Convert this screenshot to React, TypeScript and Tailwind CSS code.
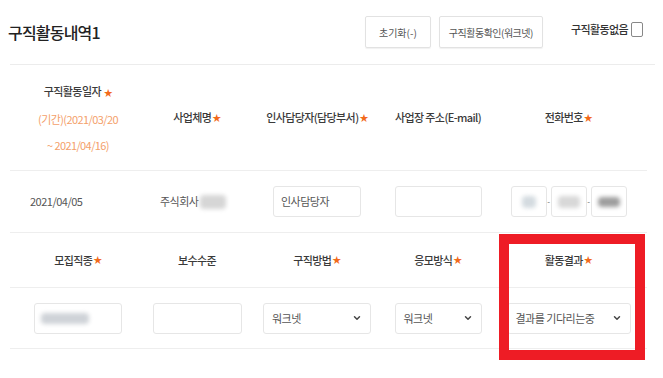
import { ChevronDown } from "lucide-react"

const font = { fontFamily: '"Noto Sans CJK KR", "Noto Sans", sans-serif' }

function Star() {
  return <span className="text-[#f26a1b] text-[9px] ml-[1px]">★</span>
}

function Blur({ w, h = 12, tone = "bg-[#c9c9c9]" }: { w: number; h?: number; tone?: string }) {
  return <span className={`inline-block rounded-sm blur-[2px] ${tone}`} style={{ width: w, height: h }} />
}

function Box({ children, w, className = "" }: { children?: React.ReactNode; w: string; className?: string }) {
  return (
    <div className={`h-[31px] border border-[#e6e6e6] rounded-[3px] bg-white flex items-center ${w} ${className}`}>
      {children}
    </div>
  )
}

function Select({ label, w }: { label: string; w: string }) {
  return (
    <Box w={w} className="px-[8px] justify-between">
      <span className="text-[11px] text-[#555] tracking-[-0.5px]">{label}</span>
      <ChevronDown size={10} strokeWidth={3.5} className="text-[#444]" />
    </Box>
  )
}

const cols = "grid grid-cols-[136px_102px_138px_104px_157px]"
const head = "flex items-center justify-center text-[11px] text-[#3a3a3a] font-medium tracking-[-0.6px]"

export default function App() {
  return (
    <div className="relative w-[663px] h-[378px] bg-white overflow-hidden" style={font}>
      {/* title bar */}
      <div className="h-[64px] flex items-center pl-[8px] pr-[20px]">
        <h1 className="text-[16px] font-medium text-[#222] tracking-[-0.8px]">구직활동내역1</h1>
        <div className="ml-auto flex items-center gap-[8px]">
          <button className="w-[66px] h-[32px] border border-[#e2e2e2] rounded-[2px] text-[10px] text-[#555] shadow-[0_1px_1px_rgba(0,0,0,0.06)]">
            초기화(-)
          </button>
          <button className="w-[104px] h-[32px] border border-[#e2e2e2] rounded-[2px] text-[10px] text-[#555] tracking-[-0.5px] shadow-[0_1px_1px_rgba(0,0,0,0.06)]">
            구직활동확인(워크넷)
          </button>
        </div>
        <div className="ml-[28px] flex items-center gap-[3px] -mt-[5px]">
          <span className="text-[11px] text-[#333] font-medium tracking-[-0.6px]">구직활동없음</span>
          <span className="w-[12px] h-[15px] border border-[#888] rounded-[2px]" />
        </div>
      </div>
      <div className="mx-[10px] mr-[8px] h-px bg-[#ececec]" />

      {/* table */}
      <div className="mx-[10px] w-[637px]">
        <div className={`${cols} h-[106px] border-b border-[#eeeeee]`}>
          <div className="flex flex-col items-center justify-center text-[11px] leading-[26px] tracking-[-0.6px]">
            <span className="text-[#3a3a3a] font-medium">
              구직활동일자 <Star />
            </span>
            <span className="text-[#f4a06a]">(기간)(2021/03/20</span>
            <span className="text-[#f4a06a]">~ 2021/04/16)</span>
          </div>
          <div className={head}>
            사업체명
            <Star />
          </div>
          <div className={head}>
            인사담당자(담당부서)
            <Star />
          </div>
          <div className={head}>사업장 주소(E-mail)</div>
          <div className={head}>
            전화번호
            <Star />
          </div>
        </div>

        <div className={`${cols} h-[62px] border-b border-[#eeeeee] items-center text-[11px] text-[#555] tracking-[-0.5px]`}>
          <div className="pl-[20px]">2021/04/05</div>
          <div className="flex items-center pl-[14px] gap-[2px]">
            주식회사 <Blur w={26} h={14} tone="bg-[#d6d6d6]" />
          </div>
          <div className="flex justify-center">
            <Box w="w-[88px]" className="px-[7px]">인사담당자</Box>
          </div>
          <div className="flex justify-center">
            <Box w="w-[87px]" />
          </div>
          <div className="flex justify-center items-center">
            <Box w="w-[36px]" className="justify-center">
              <Blur w={14} h={12} tone="bg-[#d4dbe0]" />
            </Box>
            <span className="w-[4px] text-center text-[8px] text-[#666]">-</span>
            <Box w="w-[36px]" className="justify-center">
              <Blur w={22} h={12} tone="bg-[#d8d8d8]" />
            </Box>
            <span className="w-[4px] text-center text-[8px] text-[#666]">-</span>
            <Box w="w-[36px]" className="justify-center">
              <Blur w={22} h={10} tone="bg-[#9e9e9e]" />
            </Box>
          </div>
        </div>

        <div className={`${cols} h-[55px] border-b border-[#eeeeee]`}>
          <div className={head}>
            모집직종
            <Star />
          </div>
          <div className={head}>보수수준</div>
          <div className={head}>
            구직방법
            <Star />
          </div>
          <div className={head}>
            응모방식
            <Star />
          </div>
          <div className={head}>
            활동결과
            <Star />
          </div>
        </div>

        <div className={`${cols} h-[61px] border-b border-[#eeeeee] items-center`}>
          <div className="flex justify-center">
            <Box w="w-[88px]" className="px-[6px]">
              <Blur w={48} h={11} tone="bg-[#cfd3d8]" />
            </Box>
          </div>
          <div className="flex justify-center">
            <Box w="w-[89px]" />
          </div>
          <div className="flex justify-center">
            <Select label="워크넷" w="w-[108px]" />
          </div>
          <div className="flex justify-center">
            <Select label="워크넷" w="w-[87px]" />
          </div>
          <div className="flex justify-center">
            <Select label="결과를 기다리는중" w="w-[124px]" />
          </div>
        </div>
      </div>

      {/* highlight */}
      <div className="absolute left-[499px] top-[234px] w-[146px] h-[126px] border-[10px] border-[#ee1c25]" />
    </div>
  )
}
